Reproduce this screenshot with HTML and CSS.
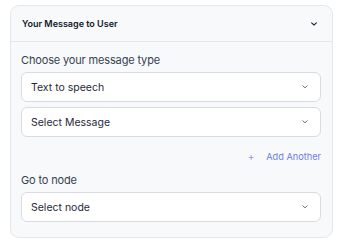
FILE: index.html
```html
<!DOCTYPE html>
<html lang="en">
<head>
    <meta charset="UTF-8">
    <meta name="viewport" content="width=device-width, initial-scale=1.0">
    <title>Your Message to User</title>
    <link rel="stylesheet" href="styles.css">
</head>
<body>

<div class="panel">
    <div class="panel-header">
        <span class="panel-title">Your Message to User</span>
        <svg class="chevron" width="8" height="6" viewBox="0 0 8 6"><path d="M1.6 1.8 L4 4 L6.4 1.8" fill="none" stroke="#1f2937" stroke-width="1.1" stroke-linecap="round" stroke-linejoin="round"/></svg>
    </div>

    <div class="panel-body">
        <label class="field-label">Choose your message type</label>
        <div class="select">
            <span>Text to speech</span>
            <svg class="chevron" width="8" height="6" viewBox="0 0 8 6"><path d="M1.8 1.8 L4 3.8 L6.2 1.8" fill="none" stroke="#6b7280" stroke-width="1" stroke-linecap="round" stroke-linejoin="round"/></svg>
        </div>
        <div class="select">
            <span>Select Message</span>
            <svg class="chevron" width="8" height="6" viewBox="0 0 8 6"><path d="M1.8 1.8 L4 3.8 L6.2 1.8" fill="none" stroke="#6b7280" stroke-width="1" stroke-linecap="round" stroke-linejoin="round"/></svg>
        </div>

        <div class="add-row">
            <a class="add-link" href="#"><span class="plus">+</span>Add Another</a>
        </div>

        <label class="field-label">Go to node</label>
        <div class="select">
            <span>Select node</span>
            <svg class="chevron" width="8" height="6" viewBox="0 0 8 6"><path d="M1.8 1.8 L4 3.8 L6.2 1.8" fill="none" stroke="#6b7280" stroke-width="1" stroke-linecap="round" stroke-linejoin="round"/></svg>
        </div>
    </div>
</div>

</body>
</html>
```

FILE: styles.css
```css
body {
    font-family: Inter, "Noto Sans", sans-serif;
    margin: 0;
    padding: 5px 11px 7px 10px;
    background: #ffffff;
    color: #1f2937;
}
.panel {
    background: #f8f9fb;
    border: 1px solid #e5e7eb;
    border-radius: 9px;
}
.panel-header {
    display: flex;
    justify-content: space-between;
    align-items: center;
    height: 35px;
    padding: 0 14px 0 11px;
    border-bottom: 1px solid #e5e7eb;
}
.panel-title {
    font-size: 9px;
    font-weight: 600;
    color: #111827;
}
.panel-body {
    padding: 11px 11px 15px 10px;
}
.field-label {
    display: block;
    font-size: 11px;
    letter-spacing: -0.15px;
    line-height: 15px;
    color: #374151;
    margin-bottom: 4px;
}
.select {
    display: flex;
    justify-content: space-between;
    align-items: center;
    height: 28px;
    padding: 0 11px 0 9px;
    background: #ffffff;
    border: 1px solid #d8dbe0;
    border-radius: 6px;
    font-size: 10.5px;
    color: #1f2937;
    margin-bottom: 5px;
}
.select:last-child {
    margin-bottom: 0;
}
.add-row {
    display: flex;
    justify-content: flex-end;
    margin: 13px 0 10px;
    line-height: 12px;
}
.add-link {
    font-size: 9.2px;
    color: #6b7ee6;
    text-decoration: none;
}
.plus {
    font-size: 10px;
    margin-right: 12px;
    color: #8d9ae8;
}
```
